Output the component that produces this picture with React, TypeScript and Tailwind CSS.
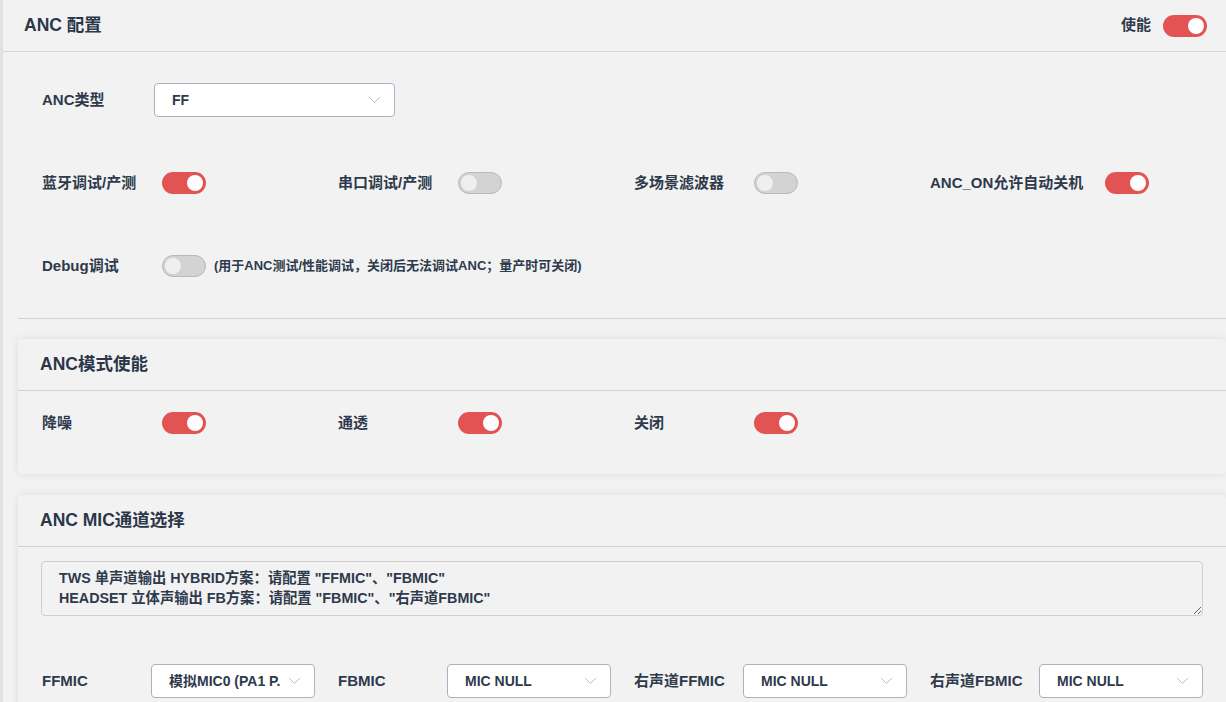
import React from 'react';

const FONT = { fontFamily: '"Liberation Sans", "Noto Sans CJK SC", sans-serif' };

function Toggle({ on }: { on: boolean }) {
    return on ? (
        <div className="relative h-[22px] w-[44px] shrink-0 rounded-full bg-[#e25353]">
            <div className="absolute right-[3px] top-[3px] h-[16px] w-[16px] rounded-full bg-white" />
        </div>
    ) : (
        <div className="relative h-[22px] w-[44px] shrink-0 rounded-full border border-[#b9b9b9] bg-[#d3d3d3]">
            <div className="absolute left-[2px] top-[2px] h-[16px] w-[16px] rounded-full bg-[#efefef]" />
        </div>
    );
}

function Chevron() {
    return (
        <svg width="13" height="8" viewBox="0 0 13 8" className="shrink-0">
            <path d="M1 1 L6.5 6.5 L12 1" fill="none" stroke="#b8bdc8" strokeWidth="1" />
        </svg>
    );
}

function Select({ value, width }: { value: string; width: string }) {
    return (
        <div className={`${width} flex h-[34px] items-center justify-between gap-[6px] rounded-[4px] border border-[#a9b1c3] bg-white pl-[17px] pr-[13px]`}>
            <span className="overflow-hidden whitespace-nowrap text-[14px] font-bold text-[#2e3a4c]">{value}</span>
            <Chevron />
        </div>
    );
}

function SwitchItem({ label, on }: { label: string; on: boolean }) {
    return (
        <div className="flex w-[296px] items-center">
            <span className="min-w-[120px] pr-[22px] text-[15px] font-bold text-[#2e3a4c]">{label}</span>
            <Toggle on={on} />
        </div>
    );
}

function MicItem({ label, value }: { label: string; value: string }) {
    return (
        <div className="flex w-[296px] items-center">
            <span className="w-[109px] text-[15px] font-bold text-[#2e3a4c]">{label}</span>
            <Select value={value} width="w-[164px]" />
        </div>
    );
}

export default function App() {
    return (
        <div style={FONT} className="h-[702px] w-[1226px] overflow-hidden border-l-[3px] border-[#e2e2e2] bg-[#f2f2f2]">
            {/* Header */}
            <div className="flex h-[52px] items-center justify-between border-b border-[#d6d6d6] pl-[21px] pr-[19px]">
                <h1 className="text-[17.5px] font-bold text-[#2b3749]">ANC 配置</h1>
                <div className="flex items-center gap-[12px]">
                    <span className="text-[15px] font-bold text-[#2e3a4c]">使能</span>
                    <Toggle on={true} />
                </div>
            </div>

            <div className="pl-[15px]">
                {/* Config form */}
                <div className="flex flex-col gap-[49px] border-b border-[#d2d2d2] pb-[35px] pl-[24px] pt-[31px]">
                    <div className="flex h-[34px] items-center">
                        <span className="w-[112px] text-[15px] font-bold text-[#2e3a4c]">ANC类型</span>
                        <Select value="FF" width="w-[241px]" />
                    </div>
                    <div className="flex h-[34px] items-center">
                        <SwitchItem label="蓝牙调试/产测" on={true} />
                        <SwitchItem label="串口调试/产测" on={false} />
                        <SwitchItem label="多场景滤波器" on={false} />
                        <SwitchItem label="ANC_ON允许自动关机" on={true} />
                    </div>
                    <div className="flex h-[34px] items-center">
                        <span className="w-[120px] text-[15px] font-bold text-[#2e3a4c]">Debug调试</span>
                        <Toggle on={false} />
                        <span className="ml-[8px] text-[13px] font-bold text-[#2e3a4c]">
                            (用于ANC测试/性能调试，关闭后无法调试ANC；量产时可关闭)
                        </span>
                    </div>
                </div>

                {/* ANC mode card */}
                <div className="mt-[20px] rounded-[4px] bg-[#f2f2f2] pb-[34px] shadow-[0_0_8px_rgba(0,0,0,0.09)]">
                    <div className="flex h-[52px] items-center border-b border-[#d2d2d2] pl-[22px]">
                        <h2 className="text-[17.5px] font-bold text-[#2b3749]">ANC模式使能</h2>
                    </div>
                    <div className="pl-[24px] pt-[15px]">
                        <div className="flex h-[34px] items-center">
                            <SwitchItem label="降噪" on={true} />
                            <SwitchItem label="通透" on={true} />
                            <SwitchItem label="关闭" on={true} />
                        </div>
                    </div>
                </div>

                {/* MIC channel card */}
                <div className="mt-[21px] rounded-[4px] bg-[#f2f2f2] pb-[20px] shadow-[0_0_8px_rgba(0,0,0,0.09)]">
                    <div className="flex h-[52px] items-center border-b border-[#d2d2d2] pl-[22px]">
                        <h2 className="text-[17.5px] font-bold text-[#2b3749]">ANC MIC通道选择</h2>
                    </div>
                    <div className="px-[23px] pt-[14px]">
                        <textarea
                            readOnly
                            style={FONT}
                            className="block h-[55px] w-full resize-y rounded-[4px] border border-[#cfcfcf] bg-[#f2f2f2] px-[17px] pt-[6px] text-[14.3px] font-semibold leading-[20px] text-[#2e3a4c] outline-none"
                            defaultValue={'TWS 单声道输出 HYBRID方案：请配置 "FFMIC"、"FBMIC"\nHEADSET 立体声输出 FB方案：请配置 "FBMIC"、"右声道FBMIC"'}
                        />
                    </div>
                    <div className="pl-[24px] pt-[48px]">
                        <div className="flex h-[34px] items-center">
                            <MicItem label="FFMIC" value="模拟MIC0 (PA1 P." />
                            <MicItem label="FBMIC" value="MIC NULL" />
                            <MicItem label="右声道FFMIC" value="MIC NULL" />
                            <MicItem label="右声道FBMIC" value="MIC NULL" />
                        </div>
                    </div>
                </div>
            </div>
        </div>
    );
}
